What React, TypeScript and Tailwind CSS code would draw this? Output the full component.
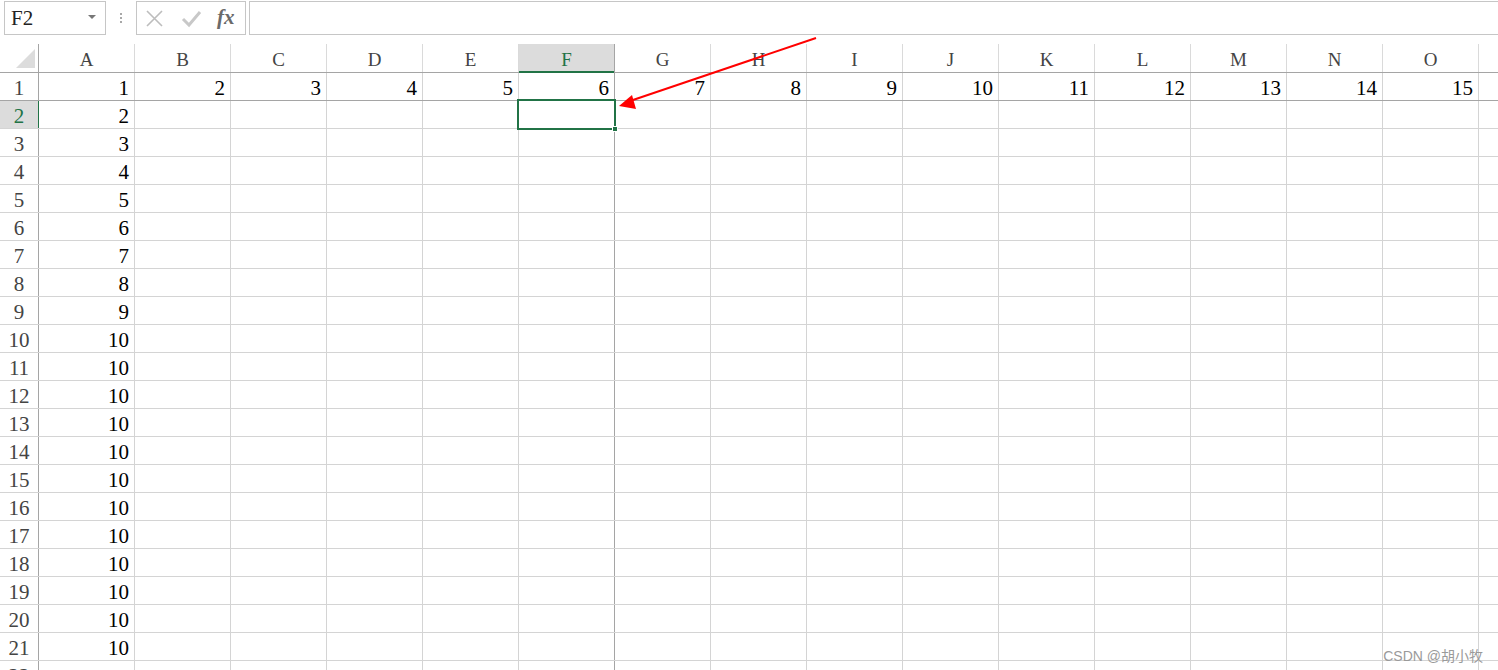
import React from 'react';

const COLS = ['A', 'B', 'C', 'D', 'E', 'F', 'G', 'H', 'I', 'J', 'K', 'L', 'M', 'N', 'O'];
const serif = { fontFamily: '"Liberation Serif", "Times New Roman", serif' };

function valueFor(row: number, col: number): string {
  if (row === 1) return String(col + 1);
  if (col === 0 && row <= 21) return String(Math.min(row, 10));
  return '';
}

function FormulaBar() {
  return (
    <div className="flex h-[44px] shrink-0 items-start pt-[1px]">
      <div className="ml-[4px] flex h-[34px] w-[102px] items-center justify-between border border-[#c6c6c6] pl-[6px] pr-[9px]">
        <span className="text-[21px] leading-none text-[#222]">F2</span>
        <span className="mt-[-2px] h-0 w-0 border-x-[4px] border-t-[4px] border-x-transparent border-t-[#777]" />
      </div>
      <div className="flex h-[34px] w-[30px] flex-col items-center justify-center gap-[2px]">
        <span className="h-[2px] w-[2px] bg-[#a8a8a8]" />
        <span className="h-[2px] w-[2px] bg-[#a8a8a8]" />
        <span className="h-[2px] w-[2px] bg-[#a8a8a8]" />
      </div>
      <div className="relative flex h-[34px] w-[110px] items-center border border-[#c6c6c6]">
        <svg width="108" height="32" viewBox="0 0 108 32" className="absolute left-0 top-0">
          <path d="M10 9 L25 24 M25 9 L10 24" stroke="#bdbdbd" strokeWidth="1.6" fill="none" />
          <path d="M46 17 L52 23 L63 10" stroke="#c8c8c8" strokeWidth="3" fill="none" />
        </svg>
        <span className="absolute left-[80px] top-[5px] text-[21px] font-bold italic leading-none text-[#6a6a6a]">
          fx
        </span>
      </div>
      <div className="ml-[3px] h-[34px] flex-1 border-y border-l border-[#c6c6c6]" />
    </div>
  );
}

function HeaderRow() {
  return (
    <div className="flex h-[29px] shrink-0 border-b border-[#a5a5a5]">
      <div className="relative w-[39px] shrink-0 border-r border-[#a5a5a5]">
        <svg width="38" height="28" className="absolute left-0 top-0">
          <polygon points="35,5 35,24 16,24" fill="#dcdcdc" />
        </svg>
      </div>
      {COLS.map((c) => {
        const sel = c === 'F';
        return (
          <div
            key={c}
            className={
              sel
                ? 'relative flex w-[96px] shrink-0 items-end justify-center border-r border-[#a5a5a5] bg-[#dcdcdc] pb-[3px] text-[19px] leading-none text-[#217346]'
                : 'flex w-[96px] shrink-0 items-end justify-center border-r border-[#dadada] pb-[3px] text-[19px] leading-none text-[#444]'
            }
          >
            {c}
            {sel && <span className="absolute bottom-[-1px] left-0 h-[2px] w-[95px] bg-[#217346]" />}
          </div>
        );
      })}
      <div className="flex-1" />
    </div>
  );
}

function Row({ r }: { r: number }) {
  const sel = r === 2;
  const line = r === 1 ? 'border-[#a5a5a5]' : 'border-[#d4d4d4]';
  return (
    <div className={`flex h-[28px] shrink-0 border-b ${line}`}>
      <div
        className={
          sel
            ? 'relative flex w-[39px] shrink-0 items-end justify-center border-r border-[#217346] bg-[#dcdcdc] text-[21px] leading-none text-[#217346]'
            : 'flex w-[39px] shrink-0 items-end justify-center border-r border-[#a5a5a5] text-[21px] leading-none text-[#444]'
        }
      >
        <span className="pb-[1px]">{r}</span>
      </div>
      {COLS.map((c, i) => (
        <div
          key={c}
          className={
            c === 'F'
              ? 'flex w-[96px] shrink-0 items-end justify-end border-r border-[#a5a5a5] pr-[5px] text-[21px] leading-none text-black'
              : 'flex w-[96px] shrink-0 items-end justify-end border-r border-[#d4d4d4] pr-[5px] text-[21px] leading-none text-black'
          }
        >
          <span className="pb-[1px]">{valueFor(r, i)}</span>
        </div>
      ))}
      <div className="flex-1" />
    </div>
  );
}

export default function App() {
  const rows = Array.from({ length: 22 }, (_, i) => i + 1);
  return (
    <div className="relative h-[670px] w-full overflow-hidden bg-white" style={serif}>
      <FormulaBar />
      <div className="relative flex h-[626px] flex-col overflow-hidden">
        <HeaderRow />
        {rows.map((r) => (
          <Row key={r} r={r} />
        ))}
        {/* selected cell F2 */}
        <div className="absolute left-[517px] top-[55px] h-[31px] w-[99px] border-2 border-[#217346]" />
        <div className="absolute left-[612px] top-[82px] h-[6px] w-[6px] border border-white bg-[#217346]" />
      </div>

      <svg className="pointer-events-none absolute left-0 top-0" width="1498" height="670">
        <line x1="816" y1="38" x2="630" y2="101" stroke="#ff0000" strokeWidth="2" />
        <polygon points="619,106 632,95 636,109" fill="#ff0000" />
      </svg>

      <div
        className="absolute bottom-[7px] right-[15px] text-[14px] leading-none text-[#9a9a9a]"
        style={{ fontFamily: '"Liberation Sans", "Noto Sans CJK SC", sans-serif' }}
      >
        CSDN @胡小牧
      </div>
    </div>
  );
}
